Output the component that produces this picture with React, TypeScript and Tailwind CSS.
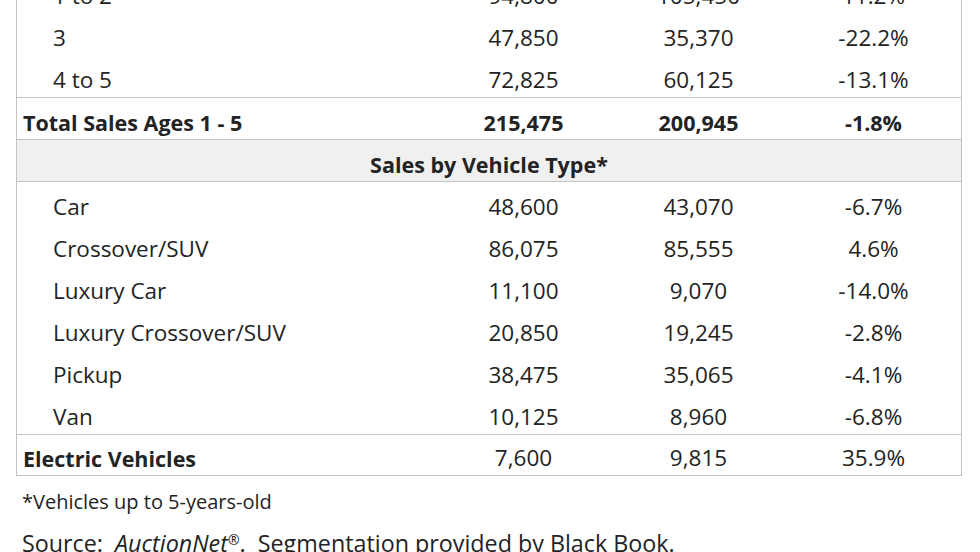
import React from "react";

type Row = { label: string; a: string; b: string; c: string; kind: "sub" | "total" | "ev" };

const topRows: Row[] = [
  { label: "1 to 2", a: "94,800", b: "105,450", c: "11.2%", kind: "sub" },
  { label: "3", a: "47,850", b: "35,370", c: "-22.2%", kind: "sub" },
  { label: "4 to 5", a: "72,825", b: "60,125", c: "-13.1%", kind: "sub" },
];

const vehicleRows: Row[] = [
  { label: "Car", a: "48,600", b: "43,070", c: "-6.7%", kind: "sub" },
  { label: "Crossover/SUV", a: "86,075", b: "85,555", c: "4.6%", kind: "sub" },
  { label: "Luxury Car", a: "11,100", b: "9,070", c: "-14.0%", kind: "sub" },
  { label: "Luxury Crossover/SUV", a: "20,850", b: "19,245", c: "-2.8%", kind: "sub" },
  { label: "Pickup", a: "38,475", b: "35,065", c: "-4.1%", kind: "sub" },
  { label: "Van", a: "10,125", b: "8,960", c: "-6.8%", kind: "sub" },
];

function DataRow({ r, border }: { r: Row; border?: string }) {
  const boldLabel = r.kind !== "sub";
  const boldNums = r.kind === "total";
  const numCls = boldNums ? "text-center font-bold text-[21.5px]" : "text-center";
  return (
    <div
      className={`grid grid-cols-[419px_175px_175px_175px] h-[42px] items-end pb-[6px] leading-none ${border ?? ""}`}
    >
      <div className={boldLabel ? "pl-[6px] font-bold text-[21.5px]" : "pl-[36px]"}>{r.label}</div>
      <div className={numCls}>{r.a}</div>
      <div className={numCls}>{r.b}</div>
      <div className={numCls}>{r.c}</div>
    </div>
  );
}

export default function App() {
  return (
    <div
      className="w-[980px] h-[552px] overflow-hidden bg-white text-[#232323]"
      style={{ fontFamily: '"Open Sans", "Noto Sans", sans-serif' }}
    >
      <div className="-mt-[29px] ml-[16px] w-[946px] border-x border-[#c4c4c4] text-[22.5px]">
        {topRows.map((r) => (
          <DataRow key={r.label} r={r} />
        ))}
        <DataRow
          r={{ label: "Total Sales Ages 1 - 5", a: "215,475", b: "200,945", c: "-1.8%", kind: "total" }}
          border="border-t border-[#c4c4c4]"
        />
        <div className="h-[43px] flex items-end justify-center pb-[6px] leading-none font-bold text-[21.5px] bg-[#f0f0f0] border-y border-[#c4c4c4]">
          Sales by Vehicle Type*
        </div>
        {vehicleRows.map((r) => (
          <DataRow key={r.label} r={r} />
        ))}
        <DataRow
          r={{ label: "Electric Vehicles", a: "7,600", b: "9,815", c: "35.9%", kind: "ev" }}
          border="border-y border-[#c4c4c4]"
        />
      </div>
      <div className="pl-[22px] pt-[16px] text-[20px] leading-none">*Vehicles up to 5-years-old</div>
      <div className="pl-[22px] pt-[20px] text-[23.3px] leading-none whitespace-nowrap">
        Source:&nbsp; <span className="italic">AuctionNet</span>
        <sup className="text-[14px]">®</sup>.&nbsp; Segmentation provided by Black Book.
      </div>
    </div>
  );
}
